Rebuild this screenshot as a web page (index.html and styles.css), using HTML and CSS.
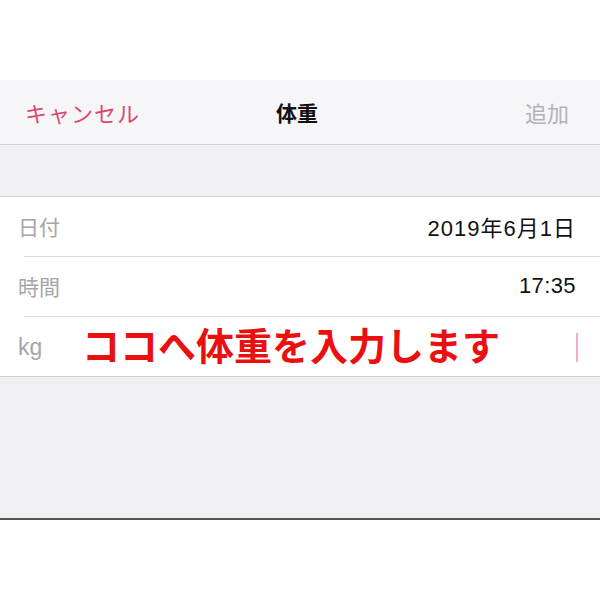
FILE: index.html
```html
<!DOCTYPE html>
<html lang="ja">
<head>
<meta charset="utf-8">
<link rel="stylesheet" href="styles.css">
</head>
<body>
<div class="top"></div>
<header class="nav">
  <span class="nav-cancel">キャンセル</span>
  <span class="nav-title">体重</span>
  <span class="nav-add">追加</span>
</header>
<div class="band"></div>
<section class="list">
  <div class="row">
    <span class="label">日付</span>
    <span class="value value-date">2019年6月1日</span>
  </div>
  <div class="row">
    <span class="label">時間</span>
    <span class="value">17:35</span>
  </div>
  <div class="row row-last">
    <span class="label label-kg">kg</span>
    <span class="cursor"></span>
    <span class="note">ココへ体重を入力します</span>
  </div>
</section>
<div class="fill"></div>
</body>
</html>
```
FILE: styles.css
```css
html, body {
  margin: 0;
  padding: 0;
  background: #ffffff;
  font-family: "Noto Sans CJK JP", "Noto Sans", sans-serif;
}
.top {
  height: 80px;
  background: #ffffff;
}
.nav {
  height: 64px;
  background: #f6f6f8;
  border-bottom: 1px solid #d2d2d6;
  display: grid;
  grid-template-columns: 1fr auto 1fr;
  align-items: center;
  padding: 0 31px 0 25px;
  font-size: 22px;
}
.nav-cancel {
  color: #d94a70;
  letter-spacing: 1px;
  justify-self: start;
}
.nav-title {
  color: #111;
  font-weight: 700;
  font-size: 21px;
}
.nav-add {
  color: #b3b3b6;
  justify-self: end;
}
.band {
  height: 51px;
  background: #efeff4;
  border-bottom: 1px solid #d8d8dc;
}
.list {
  background: #ffffff;
  border-bottom: 1px solid #d0d0d4;
}
.row {
  position: relative;
  height: 60px;
  display: flex;
  align-items: center;
  justify-content: space-between;
  padding: 0 24px 3px 18px;
  box-sizing: border-box;
  background-image: linear-gradient(#dcdce0, #dcdce0);
  background-size: calc(100% - 24px) 1px;
  background-position: 24px 100%;
  background-repeat: no-repeat;
}
.row-last {
  background-image: none;
  height: 59px;
}
.label {
  color: #a6a6a8;
  font-size: 21px;
}
.label-kg {
  font-family: "Liberation Sans", "Noto Sans", sans-serif;
  font-size: 23px;
  padding-top: 4px;
}
.value {
  color: #111;
  font-family: "Liberation Sans", "Noto Sans CJK JP", sans-serif;
  font-size: 22px;
  letter-spacing: 0.4px;
}
.value-date {
  letter-spacing: 1px;
}
.cursor {
  position: absolute;
  right: 22px;
  top: 16px;
  width: 2px;
  height: 29px;
  background: #f3b0c0;
}
.note {
  position: absolute;
  left: 82px;
  top: 0;
  bottom: 5px;
  display: flex;
  align-items: center;
  color: #ea1010;
  font-weight: 700;
  font-size: 38px;
  line-height: 1;
}
.fill {
  height: 141px;
  background: #efeff4;
  border-bottom: 2px solid #555558;
}
```
